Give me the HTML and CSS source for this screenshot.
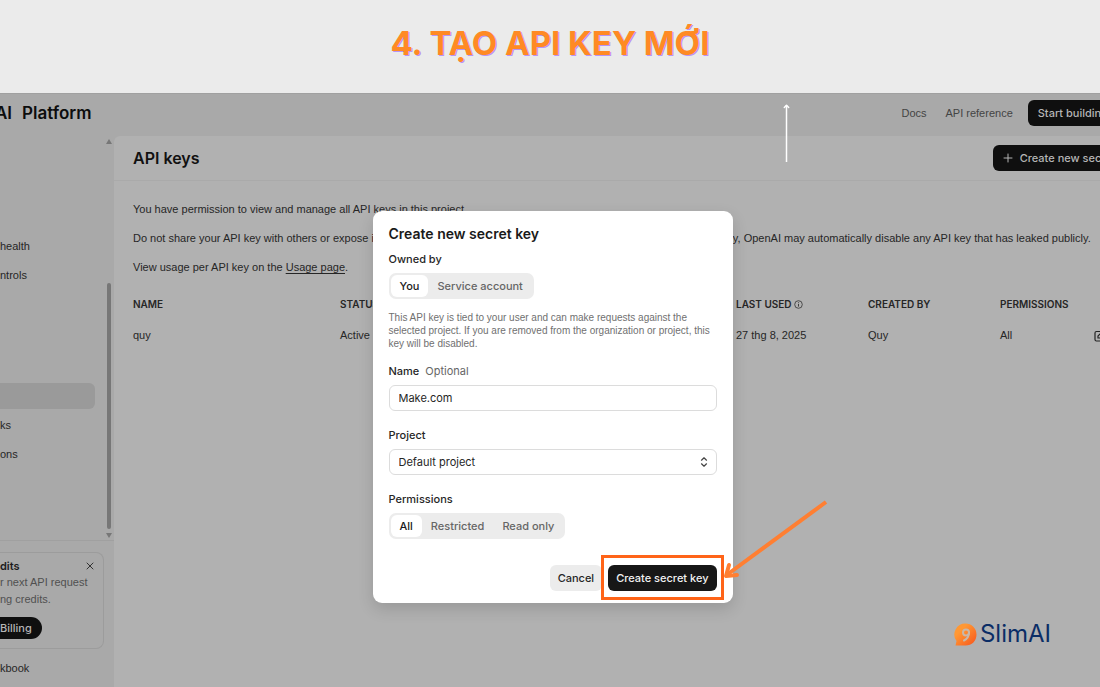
FILE: index.html
```
<!DOCTYPE html>
<html lang="vi">
<head>
    <meta charset="UTF-8">
    <meta name="viewport" content="width=device-width, initial-scale=1.0">
    <title>Tạo API key mới</title>
    <link rel="stylesheet" href="styles.css">
</head>
<body>

    <header class="banner">
        <h1>4. TẠO API KEY MỚI</h1>
    </header>

    <div class="stage">
        <div class="app">
            <div class="topbar">
                <div class="brand"><span>AI</span><span>Platform</span></div>
                <nav class="top-links">
                    <a href="#">Docs</a>
                    <a href="#">API reference</a>
                    <button class="btn dark" type="button">Start building</button>
                </nav>
            </div>

            <div class="columns">
                <aside class="sidebar">
                    <div class="scroll-area">
                        <nav class="menu">
                            <a href="#">health</a>
                            <a href="#">ntrols</a>
                            <a href="#" class="active" aria-label="API keys"></a>
                            <a href="#">ks</a>
                            <a href="#">ons</a>
                        </nav>
                        <div class="scrollbar">
                            <svg width="6" height="5" viewBox="0 0 6 5"><path d="M3 0L6 5H0z" fill="#777"/></svg>
                            <div class="thumb"></div>
                            <svg width="6" height="5" viewBox="0 0 6 5"><path d="M0 0H6L3 5z" fill="#777"/></svg>
                        </div>
                    </div>
                    <div class="side-bottom">
                        <div class="credits">
                            <div class="credits-head">
                                <strong>dits</strong>
                                <button type="button" class="close" aria-label="Close">
                                    <svg width="8" height="8" viewBox="0 0 8 8"><path d="M1 1L7 7M7 1L1 7" stroke="#333" stroke-width="1" stroke-linecap="round"/></svg>
                                </button>
                            </div>
                            <p>r next API request<br>ng credits.</p>
                            <button type="button" class="billing">Billing</button>
                        </div>
                        <a href="#" class="cookbook">kbook</a>
                    </div>
                </aside>

                <main class="content">
                    <div class="content-head">
                        <h2>API keys</h2>
                        <button class="btn dark" type="button">
                            <svg width="10" height="10" viewBox="0 0 10 10"><path d="M5 1V9M1 5H9" stroke="#b5b5b5" stroke-width="1" stroke-linecap="round"/></svg>
                            Create new secret key
                        </button>
                    </div>
                    <div class="content-body">
                        <p>You have permission to view and manage all API keys in this project.</p>
                        <p>Do not share your API key with others or expose it in the browser or other client-side code. To protect your account's security, OpenAI may automatically disable any API key that has leaked publicly.</p>
                        <p>View usage per API key on the <a href="#">Usage page</a>.</p>
                        <table class="keys">
                            <colgroup>
                                <col class="col-name"><col class="col"><col class="col"><col class="col"><col class="col"><col class="col"><col class="col-perm"><col>
                            </colgroup>
                            <thead>
                                <tr>
                                    <th>NAME</th>
                                    <th>STATUS</th>
                                    <th></th>
                                    <th></th>
                                    <th>LAST USED
                                        <svg width="9" height="9" viewBox="0 0 9 9" fill="none" stroke="#333"><circle cx="4.5" cy="4.5" r="3.8" stroke-width=".8"/><path d="M4.500 4V6.600M4.500 2.300V3.200" stroke-width=".9"/></svg>
                                    </th>
                                    <th>CREATED BY</th>
                                    <th>PERMISSIONS</th>
                                    <th></th>
                                </tr>
                            </thead>
                            <tbody>
                                <tr>
                                    <td>quy</td>
                                    <td>Active</td>
                                    <td></td>
                                    <td></td>
                                    <td>27 thg 8, 2025</td>
                                    <td>Quy</td>
                                    <td>All</td>
                                    <td>
                                        <svg width="12" height="12" viewBox="0 0 12 12" fill="none" stroke="#222" stroke-width="1.2"><path d="M6 1.500H2.500Q1 1.500 1 3V9.500Q1 11 2.500 11H9Q10.500 11 10.500 9.500V6"/><path d="M4 8V6L9 1L11 3L6 8z"/></svg>
                                    </td>
                                </tr>
                            </tbody>
                        </table>
                    </div>
                </main>
            </div>
        </div>

        <div class="backdrop">
            <form class="modal" role="dialog" aria-labelledby="modal-title">
                <h3 id="modal-title">Create new secret key</h3>
                <div class="field owner">
                    <span class="label">Owned by</span>
                    <div class="segmented">
                        <button type="button" class="on">You</button>
                        <button type="button">Service account</button>
                    </div>
                </div>
                <p class="hint">This API key is tied to your user and can make requests against the selected project. If you are removed from the organization or project, this key will be disabled.</p>
                <div class="field">
                    <label class="label" for="key-name">Name <span class="optional">Optional</span></label>
                    <input id="key-name" type="text" value="Make.com">
                </div>
                <div class="field">
                    <label class="label" for="project">Project</label>
                    <div class="select">
                        <select id="project"><option>Default project</option></select>
                        <svg width="8" height="10" viewBox="0 0 8 10" fill="none" stroke="#444" stroke-width="1.2" stroke-linecap="round" stroke-linejoin="round"><path d="M1.500 3.200L4 .8L6.500 3.200M1.500 6.800L4 9.200L6.500 6.800"/></svg>
                    </div>
                </div>
                <div class="field">
                    <span class="label">Permissions</span>
                    <div class="segmented">
                        <button type="button" class="on">All</button>
                        <button type="button">Restricted</button>
                        <button type="button">Read only</button>
                    </div>
                </div>
                <div class="actions">
                    <button type="button" class="btn light">Cancel</button>
                    <div class="target">
                        <button type="button" class="btn dark">Create secret key</button>
                        <svg class="pointer" width="108" height="84" viewBox="0 0 108 84" fill="none" stroke="#ff7f32" stroke-width="4"><path d="M104 4L6 76"/><path d="M7 67L4 78L15 77" stroke-linecap="round" stroke-linejoin="round"/></svg>
                    </div>
                </div>
            </form>
        </div>

        <svg class="up-arrow" width="7" height="58" viewBox="0 0 7 58" fill="none" stroke="#fff"><path d="M3.500 1V58" stroke-width="1.500"/><path d="M1.300 3.500L3.500 1.200L5.700 3.500" stroke-width="1.500" stroke-linecap="round" stroke-linejoin="round"/></svg>

        <div class="logo">
            <svg width="23" height="23" viewBox="0 0 23 23">
                <defs>
                    <linearGradient id="orange" x1="0" y1="0" x2="1" y2="1">
                        <stop offset=".3" stop-color="#ff9834"/>
                        <stop offset="1" stop-color="#f8541c"/>
                    </linearGradient>
                </defs>
                <path d="M11.500 .5A11 11 0 0 1 22.500 11.500C22.500 18 18 22.500 11.500 22.500H1.500L2.500 18A11 11 0 0 1 11.500 .5z" fill="url(#orange)"/>
                <circle cx="12" cy="9.500" r="3" fill="none" stroke="#c9b8a8" stroke-width="2"/>
                <path d="M15 9.500C15 13 13 16 10 17.500" fill="none" stroke="#c9b8a8" stroke-width="2" stroke-linecap="round"/>
            </svg>
            <span>SlimAI</span>
        </div>
    </div>

</body>
</html>
```
FILE: styles.css
```
* {
    box-sizing: border-box;
}
body {
    margin: 0;
    min-height: 100vh;
    display: flex;
    flex-direction: column;
    overflow: hidden;
    font-family: Inter, "Liberation Sans", sans-serif;
    font-size: 11px;
    line-height: 16px;
    color: #262626;
    background: #ebebeb;
}
h1, h2, h3, p {
    margin: 0;
}
a {
    color: inherit;
    text-decoration: none;
}
button, input, select {
    font: inherit;
    color: inherit;
    border: none;
    cursor: pointer;
}
.banner {
    height: 93px;
    display: flex;
    align-items: center;
    justify-content: center;
    padding-bottom: 7px;
}
.banner h1 {
    font-size: 33px;
    line-height: 40px;
    font-weight: 700;
    color: #ff8a24;
    text-shadow: 1px 1px 0 #b794f6;
}
.stage {
    position: relative;
    flex: 1;
    display: flex;
    overflow: hidden;
}

/* Dimmed page, runs past the right edge */
.app {
    flex: none;
    width: calc(100% + 60px);
    display: flex;
    flex-direction: column;
    background: #a9a9a9;
}
.topbar {
    height: 43px;
    display: flex;
    align-items: center;
    justify-content: space-between;
    padding: 0 42px 4px 0;
    border-top: 1px solid #a0a0a0;
}
.brand {
    display: flex;
    gap: 10px;
    font-size: 17px;
    font-weight: 600;
    color: #0d0d0d;
}
.brand span:first-child {
    margin-left: -5px;
}
.top-links {
    display: flex;
    align-items: center;
    gap: 19px;
    color: #444;
}
.top-links a, .menu, .side-bottom p, .cookbook, .content-body, .hint {
    font-family: "Liberation Sans", Arial, sans-serif;
}
.top-links .btn {
    margin-left: -4px;
}
.btn {
    height: 26px;
    display: flex;
    align-items: center;
    gap: 7px;
    padding: 0 10px;
    border-radius: 6px;
    font-weight: 500;
    white-space: nowrap;
}
.dark {
    background: #0f0f0f;
    color: #b5b5b5;
}
.light {
    background: #ececec;
}
.columns {
    flex: 1;
    display: flex;
}
.sidebar {
    width: 114px;
    display: flex;
    flex-direction: column;
}
.scroll-area {
    height: 405px;
    display: flex;
    justify-content: space-between;
    border-bottom: 1px solid #a0a0a0;
}
.menu {
    width: 95px;
    padding-top: 97px;
    display: flex;
    flex-direction: column;
    gap: 3px;
}
.menu a {
    height: 26px;
    line-height: 26px;
}
.menu .active {
    margin: 92px 0 0;
    border-radius: 0 6px 6px 0;
    background: #9a9a9a;
}
.scrollbar {
    width: 10px;
    padding: 3px 0 2px;
    display: flex;
    flex-direction: column;
    align-items: center;
    justify-content: space-between;
}
.thumb {
    width: 4px;
    height: 246px;
    margin: auto 0 4px;
    border-radius: 2px;
    background: #777;
}
.side-bottom {
    padding-top: 11px;
}
.credits {
    width: 104px;
    height: 97px;
    padding: 5px 9px 0 0;
    border: 1px solid #9c9c9c;
    border-left: none;
    border-radius: 0 8px 8px 0;
    color: #505050;
}
.credits-head {
    display: flex;
    align-items: center;
    justify-content: space-between;
    color: #1c1c1c;
}
.credits-head strong {
    font-weight: 600;
}
.close {
    display: flex;
    padding: 0;
    background: none;
}
.credits p {
    line-height: 17px;
    white-space: nowrap;
}
.billing {
    height: 22px;
    margin-top: 9px;
    padding: 0 10px 0 0;
    border-radius: 0 11px 11px 0;
    font-weight: 500;
    background: #0f0f0f;
    color: #b5b5b5;
}
.cookbook {
    display: block;
    margin-top: 11px;
}
.content {
    flex: 1;
    min-width: 0;
    background: #b1b1b1;
    border-radius: 6px 0 0 0;
}
.content-head {
    height: 45px;
    display: flex;
    align-items: center;
    justify-content: space-between;
    padding: 0 13px 0 19px;
    border-bottom: 1px solid #aaa;
}
.content-head h2 {
    font-size: 16px;
    font-weight: 600;
    color: #111;
}
.content-body {
    padding: 20px 0 0 19px;
}
.content-body p {
    margin-bottom: 13px;
    white-space: nowrap;
}
.content-body p a {
    text-decoration: underline;
    text-underline-offset: 2px;
}
.keys {
    width: 100%;
    margin-top: 12px;
    table-layout: fixed;
    border-collapse: collapse;
    text-align: left;
}
.col-name {
    width: 207px;
}
.col {
    width: 132px;
}
.col-perm {
    width: 94px;
}
.keys th, .keys td {
    padding: 0;
    height: 31px;
    white-space: nowrap;
}
.keys th {
    font-family: Inter, sans-serif;
    font-size: 10px;
    font-weight: 600;
}
.keys svg {
    vertical-align: middle;
}

/* Dialog */
.backdrop {
    position: absolute;
    inset: 0;
    display: flex;
    align-items: flex-start;
    justify-content: center;
    padding: 118px 0 0 5px;
}
.modal {
    width: 360px;
    padding: 13px 16px 12px;
    border-radius: 9px;
    background: #fff;
    box-shadow: 0 6px 16px rgba(0, 0, 0, 0.14);
}
.modal h3 {
    margin-bottom: 7px;
    font-size: 14px;
    line-height: 20px;
    font-weight: 600;
    color: #1a1a1a;
}
.field {
    display: flex;
    flex-direction: column;
    align-items: flex-start;
    gap: 6px;
    margin-bottom: 16px;
}
.owner {
    margin-bottom: 12px;
}
.label {
    font-weight: 500;
}
.optional {
    margin-left: 3px;
    font-weight: 400;
    color: #666;
}
.hint {
    margin-bottom: 13px;
    font-size: 10px;
    line-height: 13px;
    color: #707070;
}
.segmented {
    height: 26px;
    display: flex;
    padding: 2px;
    border-radius: 7px;
    background: #ececec;
}
.segmented button {
    padding: 0 9px;
    border-radius: 6px;
    font-weight: 500;
    color: #666;
    background: none;
}
.segmented .on {
    color: #1a1a1a;
    background: #fff;
}
.field input, .field select {
    width: 100%;
    height: 26px;
    padding: 0 9px;
    border: 1px solid #dcdcdc;
    border-radius: 6px;
    background: #fff;
    appearance: none;
}
.select {
    position: relative;
    width: 100%;
}
.select svg {
    position: absolute;
    right: 9px;
    top: 8px;
    pointer-events: none;
}
.actions {
    display: flex;
    justify-content: flex-end;
    gap: 6px;
    padding-top: 10px;
}
.actions .btn {
    padding: 0 8px;
}
.target {
    position: relative;
}
.target::before {
    content: '';
    position: absolute;
    inset: -10px -7px -9px;
    border: 3px solid #ff6418;
    background: #fff;
}
.target .btn {
    position: relative;
    background: #171717;
    color: #f2f2f2;
}
.pointer {
    position: absolute;
    left: calc(100% + 5px);
    bottom: 9px;
}
.up-arrow {
    position: absolute;
    left: 783px;
    top: 11px;
}
.logo {
    position: absolute;
    right: 49px;
    bottom: 41px;
    display: flex;
    align-items: center;
    gap: 3px;
    font-size: 24px;
    line-height: 24px;
    color: #0b2d66;
}
```
